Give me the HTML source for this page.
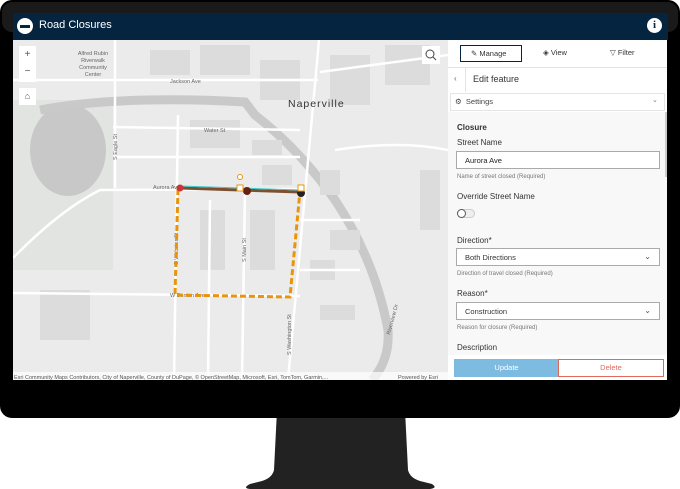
<!DOCTYPE html>
<html><head><meta charset="utf-8"><style>
*{margin:0;padding:0;box-sizing:border-box}
body{width:680px;height:489px;background:#fff;position:relative;overflow:hidden;font-family:"Liberation Sans",sans-serif}
.a{position:absolute}
.lbl{position:absolute;left:457px;font-size:8px;color:#333}
.help{position:absolute;left:457px;font-size:6px;color:#777}
.inp{position:absolute;left:456px;width:204px;height:18px;border:1px solid #aaa;background:#fff;font-size:7.5px;color:#333;padding:4px 8px}
.chev{position:absolute;right:8px;top:3px;font-size:8px;color:#555}
</style></head><body>
<!-- stand -->
<svg class="a" style="left:0;top:0" width="680" height="489">
<path d="M277 410 L405 410 L408 470 Q410 478 420 481 L432 484 Q438 488 430 489 L250 489 Q242 488 250 484 L262 481 Q272 478 274 470 Z" fill="#222"/>
<rect x="0" y="0" width="680" height="418" rx="12" fill="#000"/>
<rect x="2" y="2" width="676" height="30" rx="10" fill="#1a1a1a"/>
</svg>
<!-- header -->
<div class="a" style="left:13px;top:13px;width:655px;height:27px;background:#05243f"></div>
<div class="a" style="left:17px;top:18px;width:16px;height:16px;border-radius:50%;background:#fff"></div>
<div class="a" style="left:20px;top:25px;width:10px;height:2.5px;background:#05243f"></div>
<div class="a" style="left:39px;top:19px;font-size:11px;color:#fff">Road Closures</div>
<div class="a" style="left:647px;top:18px;width:15px;height:15px;border-radius:50%;background:#fff;color:#05243f;font:bold 11px 'Liberation Serif',serif;text-align:center;line-height:15px">i</div>
<!-- map -->
<svg class="a" style="left:13px;top:40px" width="435" height="340" viewBox="13 40 435 340">
<rect x="13" y="40" width="435" height="340" fill="#ebebeb"/>
<rect x="13" y="100" width="100" height="170" fill="#e2e4e2"/>
<ellipse cx="68" cy="150" rx="38" ry="46" fill="#c8c8c8"/>
<path d="M40 110 Q120 95 245 102 L255 115 Q300 150 335 200 Q375 260 388 330 Q390 360 372 380" fill="none" stroke="#c9c9c9" stroke-width="9"/>
<g fill="#dcdcdc">
<rect x="150" y="50" width="40" height="25"/><rect x="200" y="45" width="50" height="30"/><rect x="260" y="60" width="40" height="40"/>
<rect x="330" y="55" width="40" height="50"/><rect x="385" y="45" width="45" height="40"/><rect x="190" y="120" width="50" height="28"/>
<rect x="252" y="140" width="30" height="15"/><rect x="262" y="165" width="30" height="20"/><rect x="320" y="170" width="20" height="25"/>
<rect x="330" y="230" width="30" height="20"/><rect x="310" y="260" width="25" height="20"/><rect x="320" y="305" width="35" height="15"/>
<rect x="40" y="290" width="50" height="50"/><rect x="420" y="170" width="20" height="60"/><rect x="200" y="210" width="25" height="60"/><rect x="250" y="210" width="25" height="60"/>
</g>
<g fill="none" stroke="#fff" stroke-width="2.5">
<path d="M13 80 L318 80"/><path d="M320 72 L448 55"/><path d="M113 127 L300 130"/><path d="M113 157 L300 157"/>
<path d="M13 258 Q60 210 100 190 L300 189"/><path d="M319 40 L288 380"/><path d="M178 115 L174 380"/>
<path d="M245 190 L242 380"/><path d="M115 40 L115 188"/><path d="M13 293 L300 296"/><path d="M210 200 L208 380"/>
<path d="M335 150 Q400 140 448 150"/><path d="M300 220 L360 220"/><path d="M300 270 L360 270"/>
</g>
<g font-family="Liberation Sans" font-size="5.5" fill="#666">
<text x="93" y="55" text-anchor="middle">Alfred Rubin</text><text x="93" y="62" text-anchor="middle">Riverwalk</text>
<text x="93" y="69" text-anchor="middle">Community</text><text x="93" y="76" text-anchor="middle">Center</text>
<text x="170" y="83">Jackson Ave</text><text x="204" y="132">Water St</text><text x="153" y="189">Aurora Ave</text>
<text x="170" y="297">W Benton Ave</text>
<text transform="translate(117 160) rotate(-90)">S Eagle St</text>
<text transform="translate(178 265) rotate(-90)">S Webster St</text>
<text transform="translate(246 262) rotate(-90)">S Main St</text>
<text transform="translate(291 355) rotate(-90)">S Washington St</text>
<text transform="translate(390 335) rotate(-75)">Riverview Dr</text>
</g>
<text x="288" y="107" font-family="Liberation Sans" font-size="10.5" fill="#333" letter-spacing="1">Naperville</text>
<path d="M178 189 L175 295 L290 297 L300 191" fill="none" stroke="#e8950d" stroke-width="3" stroke-dasharray="6 3"/>
<line x1="180" y1="188" x2="300" y2="192" stroke="#7a5030" stroke-width="3"/>
<line x1="180" y1="186" x2="300" y2="190" stroke="#3cc8c8" stroke-width="1"/>
<circle cx="180" cy="188" r="3.5" fill="#c33"/><circle cx="247" cy="191" r="4" fill="#6a2010"/><circle cx="301" cy="193" r="4" fill="#222"/>
<circle cx="240" cy="177" r="2.5" fill="#fff" stroke="#e8950d"/><rect x="237" y="185" width="6" height="6" fill="#fff" stroke="#e8950d"/>
<rect x="298" y="185" width="6" height="6" fill="#fff" stroke="#e8950d"/>
<rect x="13" y="372" width="435" height="8" fill="rgba(255,255,255,.7)"/>
<text x="14" y="379" font-family="Liberation Sans" font-size="5.5" fill="#555">Esri Community Maps Contributors, City of Naperville, County of DuPage, © OpenStreetMap, Microsoft, Esri, TomTom, Garmin,...</text>
<text x="398" y="379" font-family="Liberation Sans" font-size="5.5" fill="#555">Powered by Esri</text>
</svg>
<div class="a" style="left:19px;top:46px;width:17px;height:36px;background:#fff;font-size:10px;color:#555;text-align:center;line-height:17px">+<br>−</div>
<div class="a" style="left:19px;top:88px;width:17px;height:17px;background:#fff;font-size:9px;color:#555;text-align:center;line-height:17px">⌂</div>
<div class="a" style="left:422px;top:46px;width:18px;height:18px;background:#fff"><svg width="18" height="18"><circle cx="8" cy="8" r="4" fill="none" stroke="#444" stroke-width="1"/><line x1="11" y1="11" x2="14" y2="14" stroke="#444"/></svg></div>
<!-- panel -->
<div class="a" style="left:448px;top:40px;width:219px;height:340px;background:#f8f8f8"></div>
<div class="a" style="left:448px;top:40px;width:219px;height:72px;background:#fff"></div>
<div class="a" style="left:460px;top:45px;width:62px;height:17px;border:1px solid #05243f;font-size:7.5px;color:#333;line-height:15px;padding-left:10px">✎ Manage</div>
<div class="a" style="left:543px;top:48px;font-size:7.5px;color:#333">◈ View</div>
<div class="a" style="left:610px;top:48px;font-size:7.5px;color:#333">▽ Filter</div>
<div class="a" style="left:448px;top:67px;width:219px;height:1px;background:#e4e4e4"></div>
<div class="a" style="left:465px;top:67px;width:1px;height:25px;background:#e4e4e4"></div>
<div class="a" style="left:454px;top:74px;font-size:8px;color:#666">‹</div>
<div class="a" style="left:473px;top:74px;font-size:9px;color:#333">Edit feature</div>
<div class="a" style="left:450px;top:93px;width:215px;height:18px;border:1px solid #e4e4e4;background:#fff"></div>
<div class="a" style="left:455px;top:97px;font-size:7.5px;color:#444">⚙ &nbsp;Settings</div>
<div class="a" style="left:652px;top:96px;font-size:7px;color:#777">⌄</div>
<div class="lbl" style="top:123px;font-weight:bold">Closure</div>
<div class="lbl" style="top:138px">Street Name</div>
<div class="inp" style="top:151px;color:#222">Aurora Ave</div>
<div class="help" style="top:174px">Name of street closed (Required)</div>
<div class="lbl" style="top:192px">Override Street Name</div>
<div class="a" style="left:457px;top:209px;width:18px;height:9px;border-radius:5px;background:#eee;border:1px solid #ccc"></div>
<div class="a" style="left:457px;top:209px;width:9px;height:9px;border-radius:50%;background:#fff;border:1px solid #555"></div>
<div class="lbl" style="top:236px">Direction*</div>
<div class="inp" style="top:248px">Both Directions<span class="chev">⌄</span></div>
<div class="help" style="top:271px">Direction of travel closed (Required)</div>
<div class="lbl" style="top:289px">Reason*</div>
<div class="inp" style="top:302px">Construction<span class="chev">⌄</span></div>
<div class="help" style="top:325px">Reason for closure (Required)</div>
<div class="lbl" style="top:343px">Description</div>
<div class="a" style="left:448px;top:355px;width:219px;height:25px;background:#fff"></div>
<div class="a" style="left:454px;top:359px;width:105px;height:18px;background:#7dbbe0;color:#fff;font-size:7.5px;text-align:center;line-height:18px">Update</div>
<div class="a" style="left:558px;top:359px;width:106px;height:18px;border:1px solid #e06a5a;background:#fff;color:#e06a5a;font-size:7.5px;text-align:center;line-height:16px">Delete</div>
<div class="a" style="left:665px;top:112px;width:2px;height:65px;background:#ccc"></div>
</body></html>
